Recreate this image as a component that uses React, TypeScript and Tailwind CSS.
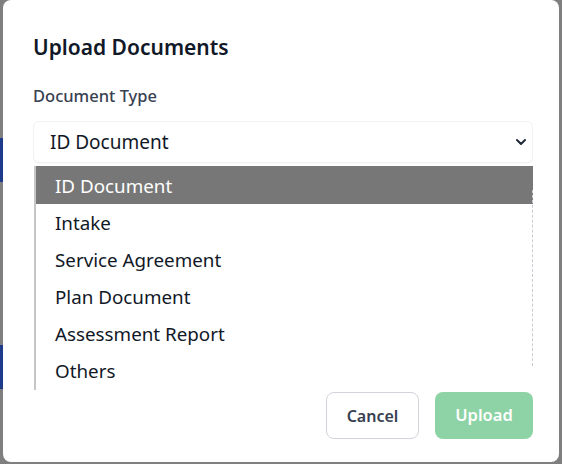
import { useState } from 'react';

const documentTypes = [
  'ID Document',
  'Intake',
  'Service Agreement',
  'Plan Document',
  'Assessment Report',
  'Others',
];

export default function App() {
  const [selected] = useState('ID Document');

  return (
    <div className="relative h-[464px] w-[562px] overflow-hidden bg-[#7f7f7f] font-['Noto_Sans',sans-serif]">
      {/* page behind the overlay */}
      <div className="absolute left-0 top-[138px] h-[44px] w-[3px] bg-[#1e3a8a]" />
      <div className="absolute left-0 top-[345px] h-[44px] w-[3px] bg-[#1e3a8a]" />

      <div className="ml-[3px] flex h-[462px] w-[556px] flex-col rounded-lg bg-white pl-[30px] pr-[26px] pt-[33px]">
        <h2 className="text-[21px] font-semibold leading-[28px] text-[#111827]">Upload Documents</h2>

        <label className="mt-[25px] text-[16.5px] font-medium leading-5 text-[#374151]">Document Type</label>

        <div className="relative mt-[15px] h-[269px]">
          <div className="flex h-[42px] w-[500px] items-center justify-between rounded-md border border-[#f1f2f4] bg-white pl-[16px] pr-[5px] shadow-[0_1px_1px_rgba(0,0,0,0.03)]">
            <span className="text-[19px] text-[#111827]">{selected}</span>
            <svg className="h-[12px] w-[12px] text-[#1f2937]" viewBox="0 0 12 12" fill="none" stroke="currentColor" strokeWidth="2" strokeLinecap="round" strokeLinejoin="round">
              <path d="M2 4l4 4 4-4" />
            </svg>
          </div>

          {/* open native list */}
          <ul className="absolute left-[1px] top-[45px] z-10 h-[224px] w-[499px] border-l-2 border-[#c6c6c6] bg-white">
            {documentTypes.map((type) => (
              <li
                key={type}
                className={`flex items-center pl-[19px] pt-[2px] text-[18.8px] ${
                  type === selected ? 'h-[38px] bg-[#777777] text-white' : 'h-[37px] text-[#111827]'
                }`}
              >
                {type}
              </li>
            ))}
            <div className="absolute right-0 top-[24px] h-[176px] border-r border-dashed border-[#c9ccd3]" />
          </ul>
        </div>

        <div className="mt-[2px] flex justify-end gap-[16px]">
          <button
            type="button"
            className="h-[47px] w-[93px] rounded-lg border border-[#d1d5db] bg-white text-[16px] font-semibold text-[#374151]"
          >
            Cancel
          </button>
          <button
            type="button"
            disabled
            className="h-[47px] w-[98px] rounded-lg bg-[#8dd3a5] text-[16.5px] font-semibold text-white"
          >
            Upload
          </button>
        </div>
      </div>
    </div>
  );
}
